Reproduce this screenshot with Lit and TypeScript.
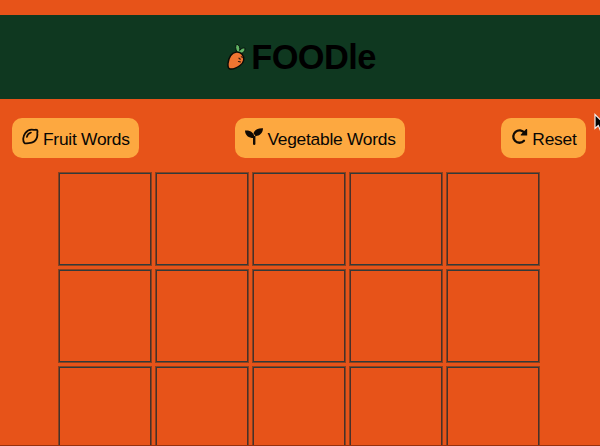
import { LitElement, html, css, svg } from "lit";
import { customElement } from "lit/decorators.js";

const lemon = svg`<path d="M2.300 14.800C.6 12.600 1 8.200 3.200 5.200C5.400 2.200 8.800 1.200 11.800 1.900C13 2.100 14 1.300 15 2C16 3 15.200 4.200 15.300 5.400C15.700 8.800 14.400 11.800 11.800 13.800C9.400 15.600 6.600 14.900 4.800 15.300C3.700 15.600 3 15.500 2.300 14.800Z" fill="none" stroke="#120b04" stroke-width="1.800"/><path d="M4.800 9C5.300 6.800 6.800 5.300 9 4.600" fill="none" stroke="#120b04" stroke-width="1.600" stroke-linecap="round"/>`;
const seedling = svg`<path d="M0 2.500C5.500 2 9.200 4.700 9.600 10C4 10.300.2 7.800 0 2.500Z"/><path d="M18 .3C12.800 0 9.200 2.200 8.500 5.400C9.600 6.400 10.300 7.300 10.500 8.200C15 7.700 17.800 5.200 18 .3Z"/><path d="M8 8H10.400V16Q10.300 17 9.200 17Q8 17 8 16Z"/>`;
const redo = svg`<path d="M13.500 4.900A6.200 6.200 0 1 0 13 12.800" fill="none" stroke="#120b04" stroke-width="2.300" stroke-linecap="round"/><path d="M15.200 1Q16.200.6 16.200 1.700V7.500H10.300Q9.100 7.400 9.900 6.500Z"/>`;

@customElement("app-root")
export class AppRoot extends LitElement {
  static styles = css`
    :host {
      display: block;
      position: relative;
      box-sizing: border-box;
      height: 446px;
      padding-top: 15px;
      overflow: hidden;
      background: #e75319;
      border-bottom: 1px solid #97310d;
      color: #080604;
      font-family: "Liberation Sans", Arial, sans-serif;
    }
    header {
      display: flex;
      justify-content: center;
      align-items: center;
      box-sizing: border-box;
      height: 84px;
      padding-left: 2px;
      background: #0f3820;
      gap: 4px;
    }
    h1 {
      margin: 0 0 1px;
      font-size: 34.4px;
      letter-spacing: -0.6px;
      line-height: 40px;
      color: #000;
    }
    .carrot {
      width: 21px;
      height: 28px;
    }
    nav {
      display: flex;
      justify-content: space-between;
      padding: 19px 14px 0 12px;
    }
    button {
      display: flex;
      align-items: center;
      box-sizing: border-box;
      height: 40px;
      padding: 1px 9.5px 0 10px;
      border: 0;
      border-radius: 10px;
      background: #fda840;
      color: #080604;
      font: 17.4px/20px "Liberation Sans", Arial, sans-serif;
      letter-spacing: -0.26px;
      white-space: nowrap;
    }
    .icon {
      flex: none;
      width: 17px;
      height: 17px;
      margin: 0 4px 4px 0;
      fill: #120b04;
    }
    .icon.wide {
      width: 18px;
    }
    .board {
      display: grid;
      grid-template-columns: repeat(5, 92px);
      grid-auto-rows: 92px;
      gap: 5px;
      margin: 15px 0 0 59px;
    }
    .tile {
      box-sizing: border-box;
      border: 1px solid #47302a;
      border-top-color: #303a3c;
      border-bottom-color: #303a3c;
      box-shadow: 0 0 0 1px rgba(75, 55, 35, 0.6);
    }
    .pointer {
      position: absolute;
      left: 593px;
      top: 113px;
      width: 14px;
      height: 20px;
    }
  `;

  private action(label: string, icon: unknown, wide = false) {
    return html`<button>
      <svg class="icon ${wide ? "wide" : ""}" viewBox="0 0 ${wide ? 18 : 17} 17">${icon}</svg>${label}
    </button>`;
  }

  render() {
    return html`
      <header>
        <svg class="carrot" viewBox="0 0 20 28">
          <path d="M10.800 9.500C8.800 6 8.600 2.800 10.300 1.200C13 2.300 13.700 4.500 13.200 7.500C14.700 5.200 16.700 4.600 18.600 5.200C18.700 8.300 16.900 10.200 13.500 10.500Z" fill="#62b565" stroke="#07150c" stroke-width="1"/>
          <path d="M4.200 12.500C7.200 8.300 12.500 8 15.500 11.200C18.600 14.700 17.700 19.500 13.500 22.500C10 25 6 26.600 3 25.800C.5 24.500 1.200 16.800 4.200 12.500Z" fill="#f07531" stroke="#090b07" stroke-width="1.400"/>
          <path d="M12.500 15.200L13.800 16.200M16 14.300L14.800 13.800M12 18.500L13.800 18.800" fill="none" stroke="#32180d" stroke-width="1.200" stroke-linecap="round"/>
        </svg>
        <h1>FOODle</h1>
      </header>
      <nav>
        ${this.action("Fruit Words", lemon)} ${this.action("Vegetable Words", seedling, true)}
        ${this.action("Reset", redo)}
      </nav>
      <main class="board">${Array.from({ length: 15 }, () => html`<div class="tile"></div>`)}</main>
      <svg class="pointer" viewBox="0 0 14 20">
        <path d="M2 1.500V15.500L5.300 12.500L7.700 18L10.200 17L7.800 11.500H12Z" fill="#050505" stroke="#f4eeee" stroke-width="1.200"/>
      </svg>
    `;
  }
}
